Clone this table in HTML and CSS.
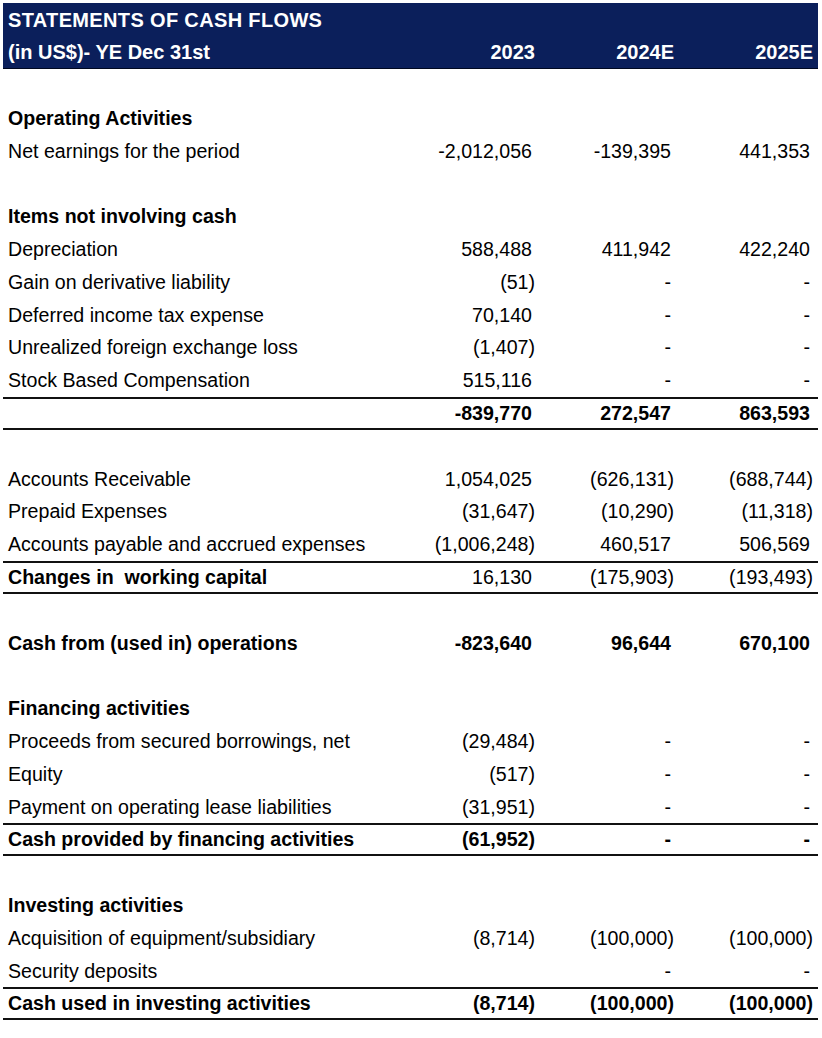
FILE: index.html
```html
<!DOCTYPE html>
<html>
<head>
<meta charset="utf-8">
<link rel="stylesheet" href="styles.css">
</head>
<body>
<div class="sheet">
  <div class="head">
    <div class="row"><div class="lbl title">STATEMENTS OF CASH FLOWS</div><div class="v"></div><div class="v"></div><div class="v"></div></div>
    <div class="row"><div class="lbl">(in US$)- YE Dec 31st</div><div class="v">2023</div><div class="v">2024E</div><div class="v">2025E</div></div>
  </div>

  <div class="row"></div>
  <div class="row b"><div class="lbl">Operating Activities</div></div>
  <div class="row"><div class="lbl">Net earnings for the period</div><div class="v n">-2,012,056</div><div class="v n">-139,395</div><div class="v n">441,353</div></div>
  <div class="row"></div>
  <div class="row b"><div class="lbl">Items not involving cash</div></div>
  <div class="row"><div class="lbl">Depreciation</div><div class="v n">588,488</div><div class="v n">411,942</div><div class="v n">422,240</div></div>
  <div class="row"><div class="lbl">Gain on derivative liability</div><div class="v">(51)</div><div class="v n">-</div><div class="v n">-</div></div>
  <div class="row"><div class="lbl">Deferred income tax expense</div><div class="v n">70,140</div><div class="v n">-</div><div class="v n">-</div></div>
  <div class="row"><div class="lbl">Unrealized foreign exchange loss</div><div class="v">(1,407)</div><div class="v n">-</div><div class="v n">-</div></div>
  <div class="row"><div class="lbl">Stock Based Compensation</div><div class="v n">515,116</div><div class="v n">-</div><div class="v n">-</div></div>
  <div class="row ruled b"><div class="lbl"></div><div class="v n">-839,770</div><div class="v n">272,547</div><div class="v n">863,593</div></div>
  <div class="row"></div>
  <div class="row"><div class="lbl">Accounts Receivable</div><div class="v n">1,054,025</div><div class="v">(626,131)</div><div class="v">(688,744)</div></div>
  <div class="row"><div class="lbl">Prepaid Expenses</div><div class="v">(31,647)</div><div class="v">(10,290)</div><div class="v">(11,318)</div></div>
  <div class="row"><div class="lbl">Accounts payable and accrued expenses</div><div class="v">(1,006,248)</div><div class="v n">460,517</div><div class="v n">506,569</div></div>
  <div class="row ruled"><div class="lbl bold">Changes in &nbsp;working capital</div><div class="v n">16,130</div><div class="v">(175,903)</div><div class="v">(193,493)</div></div>
  <div class="row"></div>
  <div class="row b"><div class="lbl">Cash from (used in) operations</div><div class="v n">-823,640</div><div class="v n">96,644</div><div class="v n">670,100</div></div>
  <div class="row"></div>
  <div class="row b"><div class="lbl">Financing activities</div></div>
  <div class="row"><div class="lbl">Proceeds from secured borrowings, net</div><div class="v">(29,484)</div><div class="v n">-</div><div class="v n">-</div></div>
  <div class="row"><div class="lbl">Equity</div><div class="v">(517)</div><div class="v n">-</div><div class="v n">-</div></div>
  <div class="row"><div class="lbl">Payment on operating lease liabilities</div><div class="v">(31,951)</div><div class="v n">-</div><div class="v n">-</div></div>
  <div class="row ruled b"><div class="lbl">Cash provided by financing activities</div><div class="v">(61,952)</div><div class="v n">-</div><div class="v n">-</div></div>
  <div class="row"></div>
  <div class="row b"><div class="lbl">Investing activities</div></div>
  <div class="row"><div class="lbl">Acquisition of equipment/subsidiary</div><div class="v">(8,714)</div><div class="v">(100,000)</div><div class="v">(100,000)</div></div>
  <div class="row"><div class="lbl">Security deposits</div><div class="v"></div><div class="v n">-</div><div class="v n">-</div></div>
  <div class="row ruled b"><div class="lbl">Cash used in investing activities</div><div class="v">(8,714)</div><div class="v">(100,000)</div><div class="v">(100,000)</div></div>
</div>
</body>
</html>
```

FILE: styles.css
```css
html, body {
  margin: 0;
  padding: 0;
  background: #ffffff;
}

body {
  font-family: "Liberation Sans", Arial, sans-serif;
  font-size: 19.6px;
  color: #000000;
}

.sheet {
  width: 815px;
  margin: 3px 0 0 3px;
}

.head {
  background: #0b1f5b;
  color: #ffffff;
  font-weight: bold;
  font-size: 20px;
  border-bottom: 1px solid #000820;
}

.head .row {
  height: 32.5px;
}

.title {
  letter-spacing: 0.35px;
}

.row {
  display: grid;
  grid-template-columns: 1fr 139px 139px 139px;
  align-items: center;
  height: 32.8px;
  box-sizing: border-box;
  line-height: 1;
  white-space: nowrap;
  padding-top: 1px;
}

.lbl {
  padding-left: 5px;
}

.v {
  text-align: right;
  padding-right: 5px;
}

.v.n {
  padding-right: 8px;
}

.b {
  font-weight: bold;
}

.bold {
  font-weight: bold;
}

.ruled {
  border-top: 2px solid #111111;
  border-bottom: 2px solid #111111;
  padding-top: 0;
}
```
